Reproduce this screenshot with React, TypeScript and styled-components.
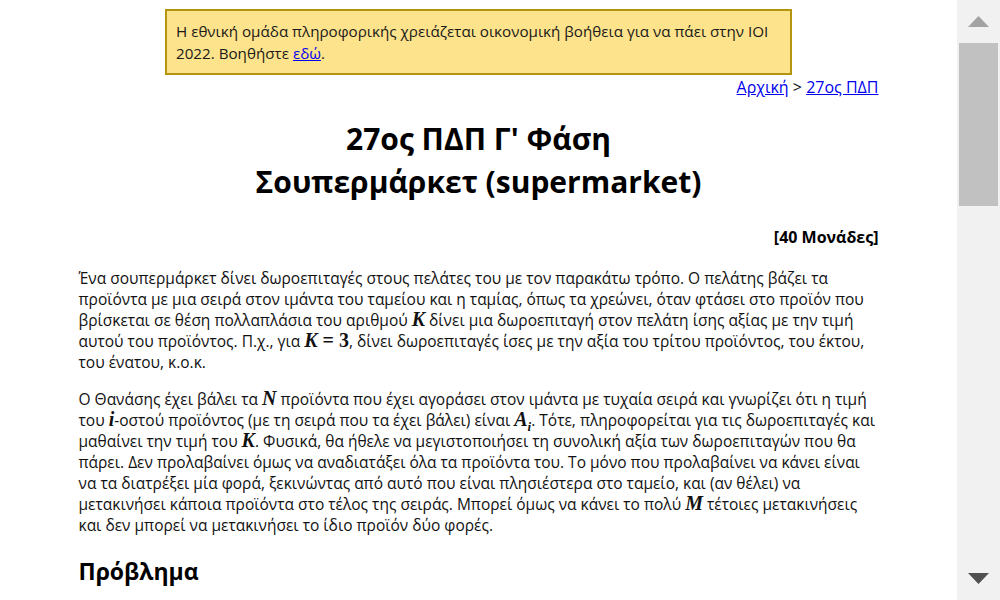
import React from "react";
import styled, { createGlobalStyle } from "styled-components";

const Global = createGlobalStyle`
  html, body { margin: 0; padding: 0; overflow: hidden; background: #fff; }
  body { font-family: "Open Sans", "Noto Sans", sans-serif; color: #111; }
`;

const Page = styled.div`
  display: flex;
  width: 1000px;
  height: 600px;
  overflow: hidden;
`;

const Main = styled.main`
  flex: 1;
  display: flex;
  flex-direction: column;
  align-items: center;
  overflow: hidden;
`;

const Banner = styled.div`
  margin-top: 9px;
  width: 606px;
  padding: 9px 8px 9px 9px;
  background: #fde38b;
  border: 2px solid #b3950f;
  font-size: 15.2px;
  line-height: 22px;
  color: #1a1a1a;
`;

const Link = styled.a`
  color: #0000ee;
  text-decoration: underline;
`;

const Content = styled.div`
  width: 800px;
`;

const Crumbs = styled.nav`
  text-align: right;
  font-size: 16px;
  line-height: 20px;
  margin-top: 2px;
  color: #111;
`;

const Title = styled.h1`
  text-align: center;
  font-size: 30px;
  line-height: 43px;
  font-weight: 700;
  margin: 20px 0 0;
  color: #000;
`;

const Points = styled.div`
  text-align: right;
  font-weight: 700;
  font-size: 16px;
  line-height: 20px;
  margin-top: 24px;
  color: #000;
`;

const Para = styled.p<{ $top: number }>`
  font-size: 15.5px;
  line-height: 21px;
  margin: ${(p) => p.$top}px 0 0;
  color: #111;
`;

const Math = styled.span<{ $upright?: boolean }>`
  font-family: "Liberation Serif", "DejaVu Serif", serif;
  font-style: ${(p) => (p.$upright ? "normal" : "italic")};
  font-weight: 700;
  font-size: 20px;
  line-height: 0;
`;

const Sub = styled.sub`
  font-size: 13px;
  line-height: 0;
`;

const H2 = styled.h2`
  font-size: 23px;
  line-height: 30px;
  font-weight: 700;
  margin: 20px 0 0;
  color: #000;
`;

const Scrollbar = styled.div`
  width: 43px;
  background: #f1f1f1;
  display: flex;
  flex-direction: column;
  align-items: center;
`;

const ArrowBox = styled.div`
  height: 43px;
  width: 100%;
  display: flex;
  align-items: center;
  justify-content: center;
`;

const Thumb = styled.div`
  width: 39px;
  height: 163px;
  background: #c1c1c1;
`;

const Spacer = styled.div`
  flex: 1;
`;

export default function App() {
  return (
    <>
      <Global />
      <Page>
        <Main>
          <Banner>
            Η εθνική ομάδα πληροφορικής χρειάζεται οικονομική βοήθεια για να πάει στην IOI 2022. Βοηθήστε{" "}
            <Link href="#">εδώ</Link>.
          </Banner>
          <Content>
            <Crumbs>
              <Link href="#">Αρχική</Link> &gt; <Link href="#">27ος ΠΔΠ</Link>
            </Crumbs>
            <Title>
              27ος ΠΔΠ Γ' Φάση
              <br />
              Σουπερμάρκετ (supermarket)
            </Title>
            <Points>[40 Μονάδες]</Points>
            <Para $top={21}>
              Ένα σουπερμάρκετ δίνει δωροεπιταγές στους πελάτες του με τον παρακάτω τρόπο. Ο πελάτης βάζει τα
              προϊόντα με μια σειρά στον ιμάντα του ταμείου και η ταμίας, όπως τα χρεώνει, όταν φτάσει στο προϊόν που
              βρίσκεται σε θέση πολλαπλάσια του αριθμού <Math>K</Math> δίνει μια δωροεπιταγή στον πελάτη ίσης αξίας με
              την τιμή αυτού του προϊόντος. Π.χ., για <Math>K</Math>
              <Math $upright> = 3</Math>, δίνει δωροεπιταγές ίσες με την αξία του τρίτου προϊόντος, του έκτου, του
              ένατου, κ.ο.κ.
            </Para>
            <Para $top={16}>
              Ο Θανάσης έχει βάλει τα <Math>N</Math> προϊόντα που έχει αγοράσει στον ιμάντα με τυχαία σειρά και
              γνωρίζει ότι η τιμή του <Math>i</Math>-οστού προϊόντος (με τη σειρά που τα έχει βάλει) είναι{" "}
              <Math>
                A<Sub>i</Sub>
              </Math>
              . Τότε, πληροφορείται για τις δωροεπιταγές και μαθαίνει την τιμή του <Math>K</Math>. Φυσικά, θα ήθελε
              να μεγιστοποιήσει τη συνολική αξία των δωροεπιταγών που θα πάρει. Δεν προλαβαίνει όμως να αναδιατάξει
              όλα τα προϊόντα του. Το μόνο που προλαβαίνει να κάνει είναι να τα διατρέξει μία φορά, ξεκινώντας από
              αυτό που είναι πλησιέστερα στο ταμείο, και (αν θέλει) να μετακινήσει κάποια προϊόντα στο τέλος της
              σειράς. Μπορεί όμως να κάνει το πολύ <Math>M</Math> τέτοιες μετακινήσεις και δεν μπορεί να μετακινήσει
              το ίδιο προϊόν δύο φορές.
            </Para>
            <H2>Πρόβλημα</H2>
          </Content>
        </Main>
        <Scrollbar>
          <ArrowBox>
            <svg width="21" height="11" viewBox="0 0 21 11">
              <polygon points="0,11 21,11 10.5,0" fill="#a3a3a3" />
            </svg>
          </ArrowBox>
          <Thumb />
          <Spacer />
          <ArrowBox>
            <svg width="21" height="11" viewBox="0 0 21 11">
              <polygon points="0,0 21,0 10.5,11" fill="#505050" />
            </svg>
          </ArrowBox>
        </Scrollbar>
      </Page>
    </>
  );
}
